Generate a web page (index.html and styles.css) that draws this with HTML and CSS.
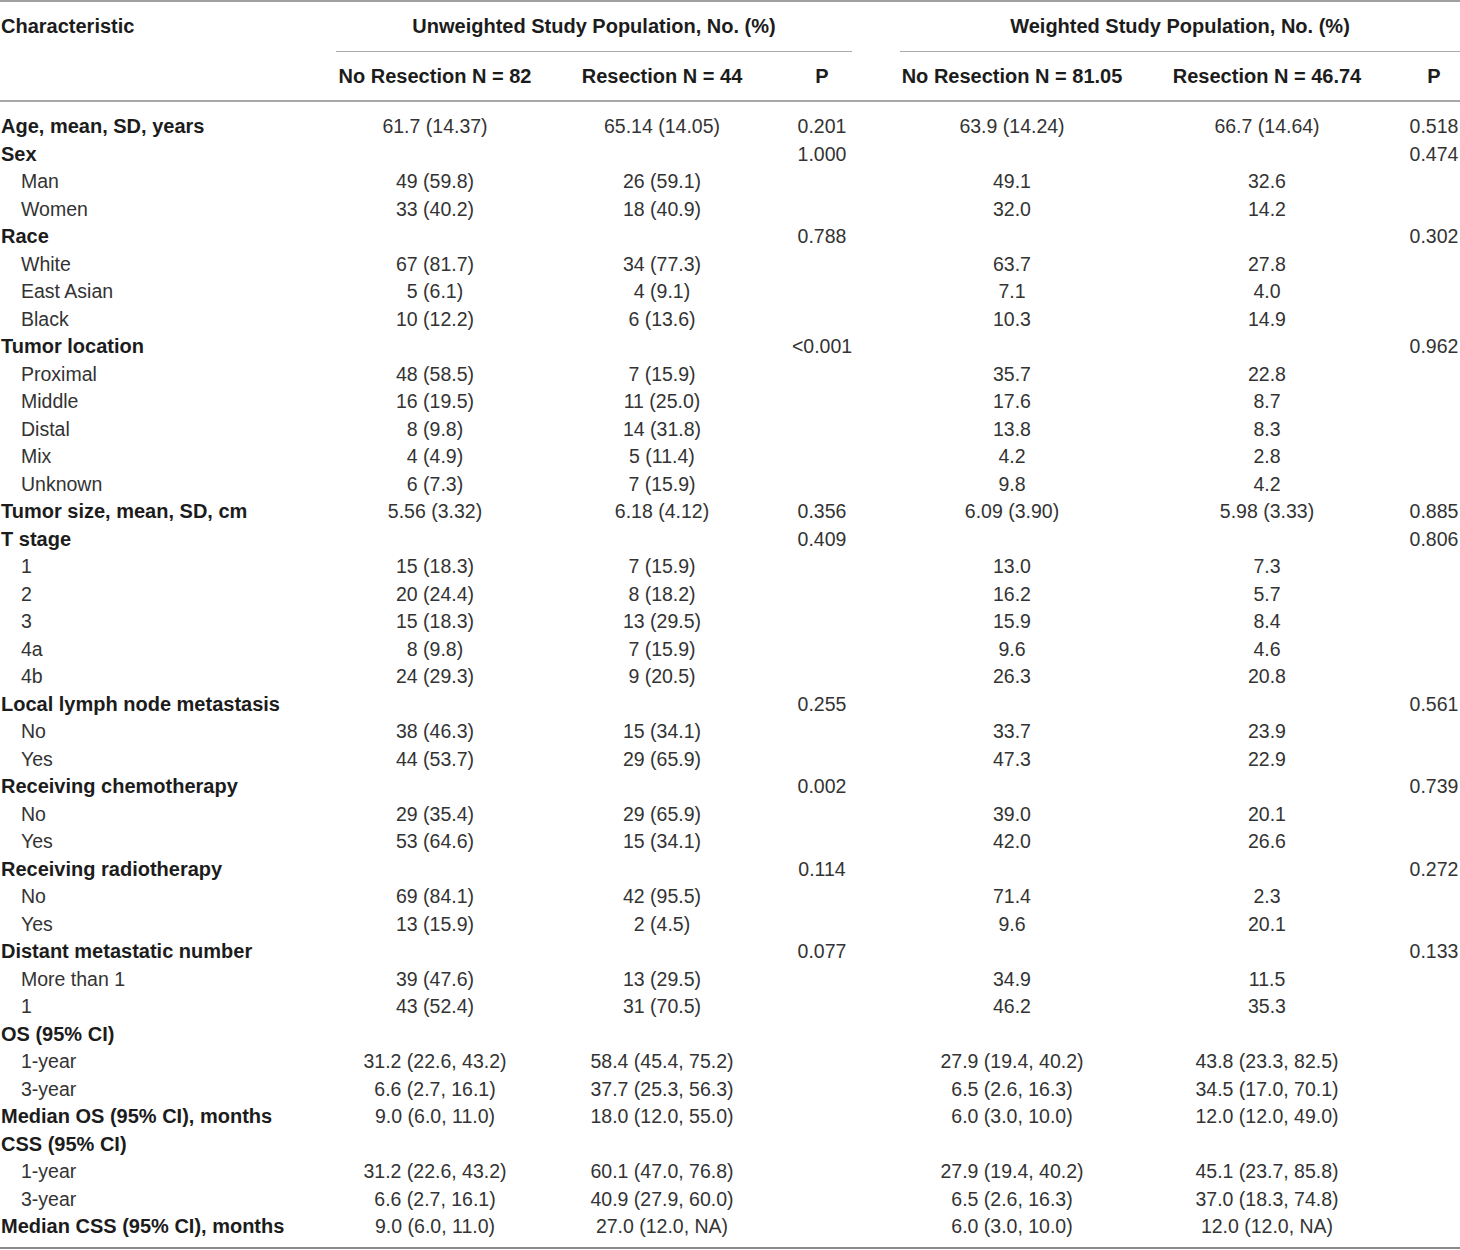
FILE: index.html
```html
<!DOCTYPE html>
<html lang="en">
<head>
<meta charset="utf-8">
<title>Table</title>
<link rel="stylesheet" href="styles.css">
</head>
<body>
<table class="tbl">
<colgroup>
<col class="c0"><col class="c1"><col class="c2"><col class="c3"><col class="c4"><col class="c5"><col class="c6">
</colgroup>
<thead>
<tr class="h1">
<th class="lab">Characteristic</th>
<th colspan="3" class="grp"><div class="grp-in g1">Unweighted Study Population, No. (%)</div></th>
<th colspan="3" class="grp"><div class="grp-in g2">Weighted Study Population, No. (%)</div></th>
</tr>
<tr class="h2">
<th class="lab"></th>
<th>No Resection N = 82</th>
<th>Resection N = 44</th>
<th>P</th>
<th>No Resection N = 81.05</th>
<th>Resection N = 46.74</th>
<th class="plast">P</th>
</tr>
</thead>
<tbody>
<tr><td class="b">Age, mean, SD, years</td><td>61.7 (14.37)</td><td>65.14 (14.05)</td><td>0.201</td><td>63.9 (14.24)</td><td>66.7 (14.64)</td><td class="plast">0.518</td></tr>
<tr><td class="b">Sex</td><td></td><td></td><td>1.000</td><td></td><td></td><td class="plast">0.474</td></tr>
<tr><td class="s">Man</td><td>49 (59.8)</td><td>26 (59.1)</td><td></td><td>49.1</td><td>32.6</td><td class="plast"></td></tr>
<tr><td class="s">Women</td><td>33 (40.2)</td><td>18 (40.9)</td><td></td><td>32.0</td><td>14.2</td><td class="plast"></td></tr>
<tr><td class="b">Race</td><td></td><td></td><td>0.788</td><td></td><td></td><td class="plast">0.302</td></tr>
<tr><td class="s">White</td><td>67 (81.7)</td><td>34 (77.3)</td><td></td><td>63.7</td><td>27.8</td><td class="plast"></td></tr>
<tr><td class="s">East Asian</td><td>5 (6.1)</td><td>4 (9.1)</td><td></td><td>7.1</td><td>4.0</td><td class="plast"></td></tr>
<tr><td class="s">Black</td><td>10 (12.2)</td><td>6 (13.6)</td><td></td><td>10.3</td><td>14.9</td><td class="plast"></td></tr>
<tr><td class="b">Tumor location</td><td></td><td></td><td>&lt;0.001</td><td></td><td></td><td class="plast">0.962</td></tr>
<tr><td class="s">Proximal</td><td>48 (58.5)</td><td>7 (15.9)</td><td></td><td>35.7</td><td>22.8</td><td class="plast"></td></tr>
<tr><td class="s">Middle</td><td>16 (19.5)</td><td>11 (25.0)</td><td></td><td>17.6</td><td>8.7</td><td class="plast"></td></tr>
<tr><td class="s">Distal</td><td>8 (9.8)</td><td>14 (31.8)</td><td></td><td>13.8</td><td>8.3</td><td class="plast"></td></tr>
<tr><td class="s">Mix</td><td>4 (4.9)</td><td>5 (11.4)</td><td></td><td>4.2</td><td>2.8</td><td class="plast"></td></tr>
<tr><td class="s">Unknown</td><td>6 (7.3)</td><td>7 (15.9)</td><td></td><td>9.8</td><td>4.2</td><td class="plast"></td></tr>
<tr><td class="b">Tumor size, mean, SD, cm</td><td>5.56 (3.32)</td><td>6.18 (4.12)</td><td>0.356</td><td>6.09 (3.90)</td><td>5.98 (3.33)</td><td class="plast">0.885</td></tr>
<tr><td class="b">T stage</td><td></td><td></td><td>0.409</td><td></td><td></td><td class="plast">0.806</td></tr>
<tr><td class="s">1</td><td>15 (18.3)</td><td>7 (15.9)</td><td></td><td>13.0</td><td>7.3</td><td class="plast"></td></tr>
<tr><td class="s">2</td><td>20 (24.4)</td><td>8 (18.2)</td><td></td><td>16.2</td><td>5.7</td><td class="plast"></td></tr>
<tr><td class="s">3</td><td>15 (18.3)</td><td>13 (29.5)</td><td></td><td>15.9</td><td>8.4</td><td class="plast"></td></tr>
<tr><td class="s">4a</td><td>8 (9.8)</td><td>7 (15.9)</td><td></td><td>9.6</td><td>4.6</td><td class="plast"></td></tr>
<tr><td class="s">4b</td><td>24 (29.3)</td><td>9 (20.5)</td><td></td><td>26.3</td><td>20.8</td><td class="plast"></td></tr>
<tr><td class="b">Local lymph node metastasis</td><td></td><td></td><td>0.255</td><td></td><td></td><td class="plast">0.561</td></tr>
<tr><td class="s">No</td><td>38 (46.3)</td><td>15 (34.1)</td><td></td><td>33.7</td><td>23.9</td><td class="plast"></td></tr>
<tr><td class="s">Yes</td><td>44 (53.7)</td><td>29 (65.9)</td><td></td><td>47.3</td><td>22.9</td><td class="plast"></td></tr>
<tr><td class="b">Receiving chemotherapy</td><td></td><td></td><td>0.002</td><td></td><td></td><td class="plast">0.739</td></tr>
<tr><td class="s">No</td><td>29 (35.4)</td><td>29 (65.9)</td><td></td><td>39.0</td><td>20.1</td><td class="plast"></td></tr>
<tr><td class="s">Yes</td><td>53 (64.6)</td><td>15 (34.1)</td><td></td><td>42.0</td><td>26.6</td><td class="plast"></td></tr>
<tr><td class="b">Receiving radiotherapy</td><td></td><td></td><td>0.114</td><td></td><td></td><td class="plast">0.272</td></tr>
<tr><td class="s">No</td><td>69 (84.1)</td><td>42 (95.5)</td><td></td><td>71.4</td><td>2.3</td><td class="plast"></td></tr>
<tr><td class="s">Yes</td><td>13 (15.9)</td><td>2 (4.5)</td><td></td><td>9.6</td><td>20.1</td><td class="plast"></td></tr>
<tr><td class="b">Distant metastatic number</td><td></td><td></td><td>0.077</td><td></td><td></td><td class="plast">0.133</td></tr>
<tr><td class="s">More than 1</td><td>39 (47.6)</td><td>13 (29.5)</td><td></td><td>34.9</td><td>11.5</td><td class="plast"></td></tr>
<tr><td class="s">1</td><td>43 (52.4)</td><td>31 (70.5)</td><td></td><td>46.2</td><td>35.3</td><td class="plast"></td></tr>
<tr><td class="b">OS (95% CI)</td><td></td><td></td><td></td><td></td><td></td><td class="plast"></td></tr>
<tr><td class="s">1-year</td><td>31.2 (22.6, 43.2)</td><td>58.4 (45.4, 75.2)</td><td></td><td>27.9 (19.4, 40.2)</td><td>43.8 (23.3, 82.5)</td><td class="plast"></td></tr>
<tr><td class="s">3-year</td><td>6.6 (2.7, 16.1)</td><td>37.7 (25.3, 56.3)</td><td></td><td>6.5 (2.6, 16.3)</td><td>34.5 (17.0, 70.1)</td><td class="plast"></td></tr>
<tr><td class="b">Median OS (95% CI), months</td><td>9.0 (6.0, 11.0)</td><td>18.0 (12.0, 55.0)</td><td></td><td>6.0 (3.0, 10.0)</td><td>12.0 (12.0, 49.0)</td><td class="plast"></td></tr>
<tr><td class="b">CSS (95% CI)</td><td></td><td></td><td></td><td></td><td></td><td class="plast"></td></tr>
<tr><td class="s">1-year</td><td>31.2 (22.6, 43.2)</td><td>60.1 (47.0, 76.8)</td><td></td><td>27.9 (19.4, 40.2)</td><td>45.1 (23.7, 85.8)</td><td class="plast"></td></tr>
<tr><td class="s">3-year</td><td>6.6 (2.7, 16.1)</td><td>40.9 (27.9, 60.0)</td><td></td><td>6.5 (2.6, 16.3)</td><td>37.0 (18.3, 74.8)</td><td class="plast"></td></tr>
<tr><td class="b">Median CSS (95% CI), months</td><td>9.0 (6.0, 11.0)</td><td>27.0 (12.0, NA)</td><td></td><td>6.0 (3.0, 10.0)</td><td>12.0 (12.0, NA)</td><td class="plast"></td></tr>
</tbody>
</table>
</body>
</html>
```
FILE: styles.css
```css
html, body {
  margin: 0;
  padding: 0;
  background: #fff;
}
body {
  font-family: "Liberation Sans", Arial, Helvetica, sans-serif;
  color: #333;
}
.tbl {
  width: 1460px;
  table-layout: fixed;
  border-collapse: separate;
  border-spacing: 0;
  border-top: 2px solid #a0a0a0;
  border-bottom: 2px solid #8a8a8a;
}
.c0 { width: 314px; }
.c1 { width: 242px; }
.c2 { width: 212px; }
.c3 { width: 108px; }
.c4 { width: 272px; }
.c5 { width: 238px; }
.c6 { width: 74px; }

th {
  font-weight: bold;
  font-size: 20px;
  color: #1c1c1c;
  text-align: center;
  padding: 0;
  white-space: nowrap;
}
th.lab {
  text-align: left;
  padding-left: 1px;
}
.h1 th {
  height: 50px;
  vertical-align: top;
}
.h1 th.lab {
  line-height: 49px;
}
.grp-in {
  height: 49px;
  line-height: 49px;
  border-bottom: 1px solid #a8a8a8;
}
.g1 { margin: 0 24px 0 22px; }
.g2 { margin: 0 0 0 24px; }
.h2 th {
  height: 48px;
  line-height: 48px;
  border-bottom: 2px solid #a8a8a8;
}
th.plast, td.plast {
  padding-left: 22px;
}
td {
  font-size: 19.5px;
  height: 27.5px;
  line-height: 27.5px;
  padding: 0;
  text-align: center;
  white-space: nowrap;
  vertical-align: middle;
  color: #333;
}
td.b {
  text-align: left;
  font-weight: bold;
  font-size: 20px;
  color: #1c1c1c;
  padding-left: 1px;
}
td.s {
  text-align: left;
  padding-left: 21px;
}
tbody tr:first-child td {
  padding-top: 11px;
}
tbody tr:last-child td {
  padding-bottom: 6px;
}
```
